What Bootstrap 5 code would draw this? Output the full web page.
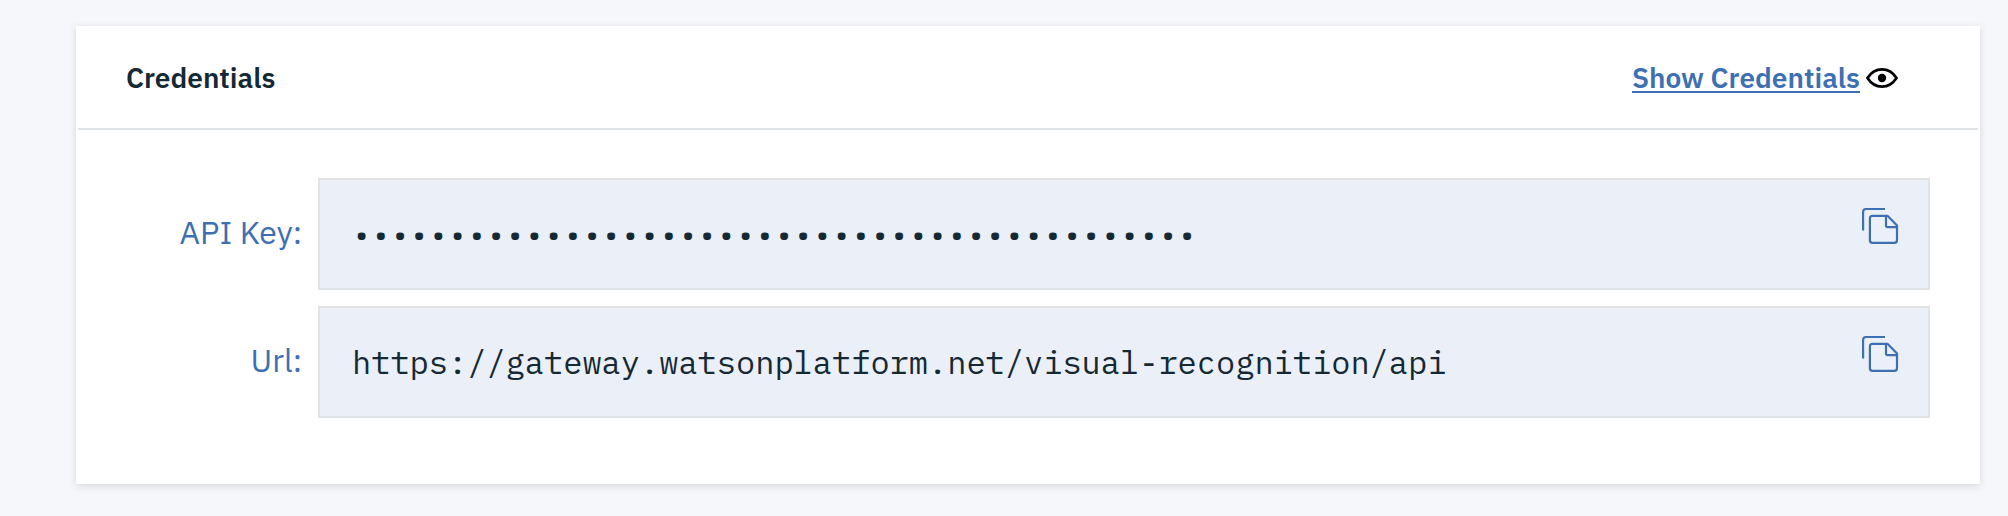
<!DOCTYPE html>
<html lang="en">
<head>
<meta charset="utf-8">
<title>Credentials</title>
<link href="https://cdn.jsdelivr.net/npm/bootstrap@5.3.0/dist/css/bootstrap.min.css" rel="stylesheet">
<style>
body{background:#f5f7fb;color:#152935;font-family:"IBM Plex Sans",Roboto,sans-serif;padding:26px 28px 32px 76px;height:516px;overflow:hidden}
.panel{height:458px;border:0;border-radius:0;box-shadow:0 2px 8px rgba(0,0,0,.13)}
.panel-head{height:104px;margin:0 2px;padding:1px 80px 0 48px;border-bottom:2px solid #dfe3e6}
.title{font-size:28px;font-weight:600;line-height:40px}
.show-link{color:#3d70b2;text-decoration-thickness:2px;text-underline-offset:3px}
.eye{margin-left:6px}
.rows{padding:48px 50px 0 50px;gap:16px}
.field-label{width:176px;color:#3d70b2;font-size:32px;line-height:40px;padding-bottom:4px}
.field-box{height:112px;background:#ebf0f8;border:2px solid #dfe3e6;padding:0 28px 0 32px;margin-left:16px}
.mono-text{font:32px/40px "IBM Plex Mono","Liberation Mono",monospace;white-space:nowrap}
.copy{margin-top:26px}
</style>
</head>
<body>
<main class="card panel">
  <header class="panel-head d-flex align-items-center justify-content-between">
    <h1 class="title m-0">Credentials</h1>
    <div class="d-flex align-items-center">
      <a href="#" class="title show-link">Show Credentials</a>
      <svg class="eye" width="32" height="20" viewBox="0 0 32 20"><path d="M1.500 10C5 4.500 10 1.400 16 1.400S27 4.500 30.500 10C27 15.500 22 18.600 16 18.600S5 15.500 1.500 10Z" fill="none" stroke="#000" stroke-width="2.700"/><circle cx="16" cy="10" r="4.200"/></svg>
    </div>
  </header>
  <div class="rows d-flex flex-column">
    <div class="d-flex align-items-center">
      <div class="field-label text-end">API Key:</div>
      <div class="field-box d-flex flex-fill align-items-center justify-content-between">
        <span class="mono-text">••••••••••••••••••••••••••••••••••••••••••••</span>
        <svg class="copy align-self-start" width="38" height="38" viewBox="0 0 38 38" fill="none" stroke="#3d70b2" stroke-width="2.200"><path d="M1.100 24.500V6Q1.100 3 4 3H23M10.500 9.800H25.500L35 19.500V34Q35 36.800 32.500 36.800H10.500Q7.900 36.800 7.900 34.300V12.300Q7.900 9.800 10.500 9.800ZM24 9.800V19.500Q24 21.200 25.700 21.200H35"/></svg>
      </div>
    </div>
    <div class="d-flex align-items-center">
      <div class="field-label text-end">Url:</div>
      <div class="field-box d-flex flex-fill align-items-center justify-content-between">
        <span class="mono-text">https://gateway.watsonplatform.net/visual-recognition/api</span>
        <svg class="copy align-self-start" width="38" height="38" viewBox="0 0 38 38" fill="none" stroke="#3d70b2" stroke-width="2.200"><path d="M1.100 24.500V6Q1.100 3 4 3H23M10.500 9.800H25.500L35 19.500V34Q35 36.800 32.500 36.800H10.500Q7.900 36.800 7.900 34.300V12.300Q7.900 9.800 10.500 9.800ZM24 9.800V19.500Q24 21.200 25.700 21.200H35"/></svg>
      </div>
    </div>
  </div>
</main>
<script src="https://cdn.jsdelivr.net/npm/bootstrap@5.3.0/dist/js/bootstrap.bundle.min.js"></script>
</body>
</html>
